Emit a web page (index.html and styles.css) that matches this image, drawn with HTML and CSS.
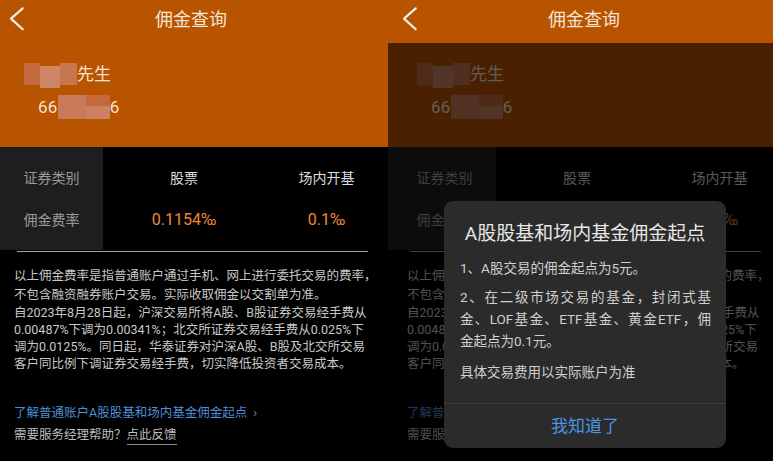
FILE: index.html
```html
<!DOCTYPE html>
<html lang="zh-CN">
<head>
<meta charset="utf-8">
<title>佣金查询</title>
<link rel="stylesheet" href="styles.css">
</head>
<body>
<div class="screens">
  <div class="screen screen-left">
    <div class="phone">
      <div class="nav">
        <div class="back"><svg width="40" height="39" viewBox="0 0 40 39"><polyline points="22.7,8.3 11,18.6 22.7,29.3" fill="none" stroke="#eeeeee" stroke-width="2.2" stroke-linecap="round" stroke-linejoin="round"/></svg></div>
        <div class="nav-title">佣金查询</div>
        <div></div>
      </div>
      <div class="user">
        <div class="user-name"><span class="mosaic mosaic-name"><i class="m1"></i><i class="m2"></i><i class="m3"></i></span>先生</div>
        <div class="user-id">66<span class="mosaic mosaic-id"><i class="m4"></i><i class="m5"></i></span>6</div>
      </div>
      <div class="rates">
        <div class="rates-head">
          <div class="cell">证券类别</div>
          <div class="cell">佣金费率</div>
        </div>
        <div class="rates-col">
          <div class="cell cell-title">股票</div>
          <div class="cell cell-value">0.1154‰</div>
        </div>
        <div class="rates-col rates-col-last">
          <div class="cell cell-title">场内开基</div>
          <div class="cell cell-value">0.1‰</div>
        </div>
      </div>
      <div class="rule"></div>
      <div class="notes">
        <p class="note-a">以上佣金费率是指普通账户通过手机、网上进行委托交易的费率，<br>不包含融资融券账户交易。实际收取佣金以交割单为准。</p>
        <p class="note-b">自2023年8月28日起，沪深交易所将A股、B股证券交易经手费从<br>0.00487%下调为0.00341%；北交所证券交易经手费从0.025%下<br>调为0.0125%。同日起，华泰证券对沪深A股、B股及北交所交易<br>客户同比例下调证券交易经手费，切实降低投资者交易成本。</p>
        <div class="link">了解普通账户A股股基和场内基金佣金起点<span class="link-arrow">›</span></div>
        <div class="help">需要服务经理帮助？<span class="help-link">点此反馈</span></div>
      </div>
    </div>
  </div>

  <div class="screen screen-right">
    <div class="phone">
      <div class="nav">
        <div class="back"><svg width="40" height="39" viewBox="0 0 40 39"><polyline points="22.7,8.3 11,18.6 22.7,29.3" fill="none" stroke="#eeeeee" stroke-width="2.2" stroke-linecap="round" stroke-linejoin="round"/></svg></div>
        <div class="nav-title">佣金查询</div>
        <div></div>
      </div>
      <div class="user">
        <div class="user-name"><span class="mosaic mosaic-name"><i class="m1"></i><i class="m2"></i><i class="m3"></i></span>先生</div>
        <div class="user-id">66<span class="mosaic mosaic-id"><i class="m4"></i><i class="m5"></i></span>6</div>
      </div>
      <div class="rates">
        <div class="rates-head">
          <div class="cell">证券类别</div>
          <div class="cell">佣金费率</div>
        </div>
        <div class="rates-col">
          <div class="cell cell-title">股票</div>
          <div class="cell cell-value">0.1154‰</div>
        </div>
        <div class="rates-col rates-col-last">
          <div class="cell cell-title">场内开基</div>
          <div class="cell cell-value">0.1‰</div>
        </div>
      </div>
      <div class="rule"></div>
      <div class="notes">
        <p class="note-a">以上佣金费率是指普通账户通过手机、网上进行委托交易的费率，<br>不包含融资融券账户交易。实际收取佣金以交割单为准。</p>
        <p class="note-b">自2023年8月28日起，沪深交易所将A股、B股证券交易经手费从<br>0.00487%下调为0.00341%；北交所证券交易经手费从0.025%下<br>调为0.0125%。同日起，华泰证券对沪深A股、B股及北交所交易<br>客户同比例下调证券交易经手费，切实降低投资者交易成本。</p>
        <div class="link">了解普通账户A股股基和场内基金佣金起点<span class="link-arrow">›</span></div>
        <div class="help">需要服务经理帮助？<span class="help-link">点此反馈</span></div>
      </div>
    </div>
    <div class="overlay"></div>
    <div class="modal">
      <div class="modal-title">A股股基和场内基金佣金起点</div>
      <div class="modal-body">
        <p class="modal-p">1、A股交易的佣金起点为5元。</p>
        <p class="modal-p modal-p2"><span class="jline">2、在二级市场交易的基金，封闭式基</span><span class="jline">金、LOF基金、ETF基金、黄金ETF，佣</span><span class="line">金起点为0.1元。</span></p>
        <p class="modal-p modal-p3">具体交易费用以实际账户为准</p>
      </div>
      <div class="modal-btn">我知道了</div>
    </div>
  </div>
</div>
</body>
</html>
```

FILE: styles.css
```css
* { box-sizing: border-box; margin: 0; padding: 0; }
html, body { margin: 0; background: #000; }
body {
  width: 773px;
  height: 461px;
  overflow: hidden;
  font-family: Roboto, "Noto Sans CJK SC", sans-serif;
}
.screens { display: flex; height: 461px; }
.screen { position: relative; overflow: hidden; height: 461px; background: #000; }
.screen-left { width: 388px; }
.screen-right { width: 385px; }
.screen-right .phone { margin-left: 5px; }
.phone { width: 388px; height: 461px; background: #000; }

.nav {
  height: 43px;
  background: #b85300;
  box-shadow: -6px 0 0 0 #b85300;
  display: grid;
  grid-template-columns: 40px 1fr 46px;
}
.back { height: 39px; }
.back svg { display: block; }
.nav-title {
  text-align: center;
  line-height: 39px;
  font-size: 18px;
  color: #f3e4d6;
}

.user {
  height: 104px;
  background: #b85300;
  box-shadow: -6px 0 0 0 #b85300;
  padding-top: 19px;
  color: #f3e3d4;
  font-size: 17px;
}
.user-name { line-height: 24px; padding-left: 24px; display: flex; align-items: center; }
.user-id { line-height: 24px; padding-left: 38px; margin-top: 9px; display: flex; align-items: center; letter-spacing: 0.3px; }
.mosaic { display: inline-flex; height: 22px; }
.mosaic i { display: block; height: 100%; }
.mosaic-name { width: 53px; }
.m1 { width: 16px; background: #c4693f; }
.m2 { width: 20px; background: #cd8666; margin-top: 3px; }
.m3 { width: 17px; background: #c7764f; }
.mosaic-id { width: 52px; height: 24px; }
.m4 { width: 28px; background: #c97a58; }
.m5 { width: 24px; background: linear-gradient(#c4683e 0 45%, #cc8262 45% 100%); }

.rates {
  display: flex;
  height: 103px;
}
.rates-head {
  width: 103px;
  background: #1e1e1f;
  box-shadow: -6px 0 0 0 #1e1e1f;
  padding-top: 10px;
  color: #9a9a9a;
}
.rates-col { width: 162px; padding-top: 10px; }
.rates-col-last { width: 123px; }
.cell {
  height: 42px;
  line-height: 42px;
  text-align: center;
  font-size: 14px;
}
.cell-title { color: #dedede; }
.cell-value { color: #ee8835; font-size: 16px; }

.rule {
  margin: 1px 0 0 17px;
  width: 351px;
  height: 1px;
  background: #a0a0a0;
}

.notes { padding: 14px 0 0 14px; color: #c8c8c8; font-size: 12.5px; white-space: nowrap; }
.note-a { line-height: 19px; }
.note-b { line-height: 17px; }
.link { margin-top: 30px; line-height: 22px; color: #4f8fd6; }
.link-arrow { color: #8a8a8a; margin-left: 6px; font-size: 13px; }
.help { line-height: 22px; color: #bdbdbd; }
.help-link { border-bottom: 1px solid #8a8a8a; padding-bottom: 2px; }

.overlay {
  position: absolute;
  top: 43px;
  left: 0;
  right: 0;
  bottom: 0;
  background: rgba(0, 0, 0, 0.6);
}
.modal {
  position: absolute;
  left: 56px;
  top: 201px;
  width: 282px;
  background: #2b2b2b;
  border-radius: 9px;
  overflow: hidden;
}
.modal-title {
  padding-top: 20px;
  line-height: 26px;
  font-size: 19px;
  text-align: center;
  color: #e8e8e8;
}
.modal-body {
  padding: 10px 15px 20px 16px;
  font-size: 13.5px;
  color: #cfcfcf;
  border-bottom: 1px solid #3d3d3d;
}
.modal-p { line-height: 22px; }
.modal-p2 { margin-top: 7px; }
.modal-p3 { margin-top: 9px; }
.jline, .line { display: block; }
.jline { text-align: justify; text-align-last: justify; }
.modal-btn {
  height: 44px;
  line-height: 44px;
  text-align: center;
  font-size: 17px;
  color: #4a95e6;
}
```
